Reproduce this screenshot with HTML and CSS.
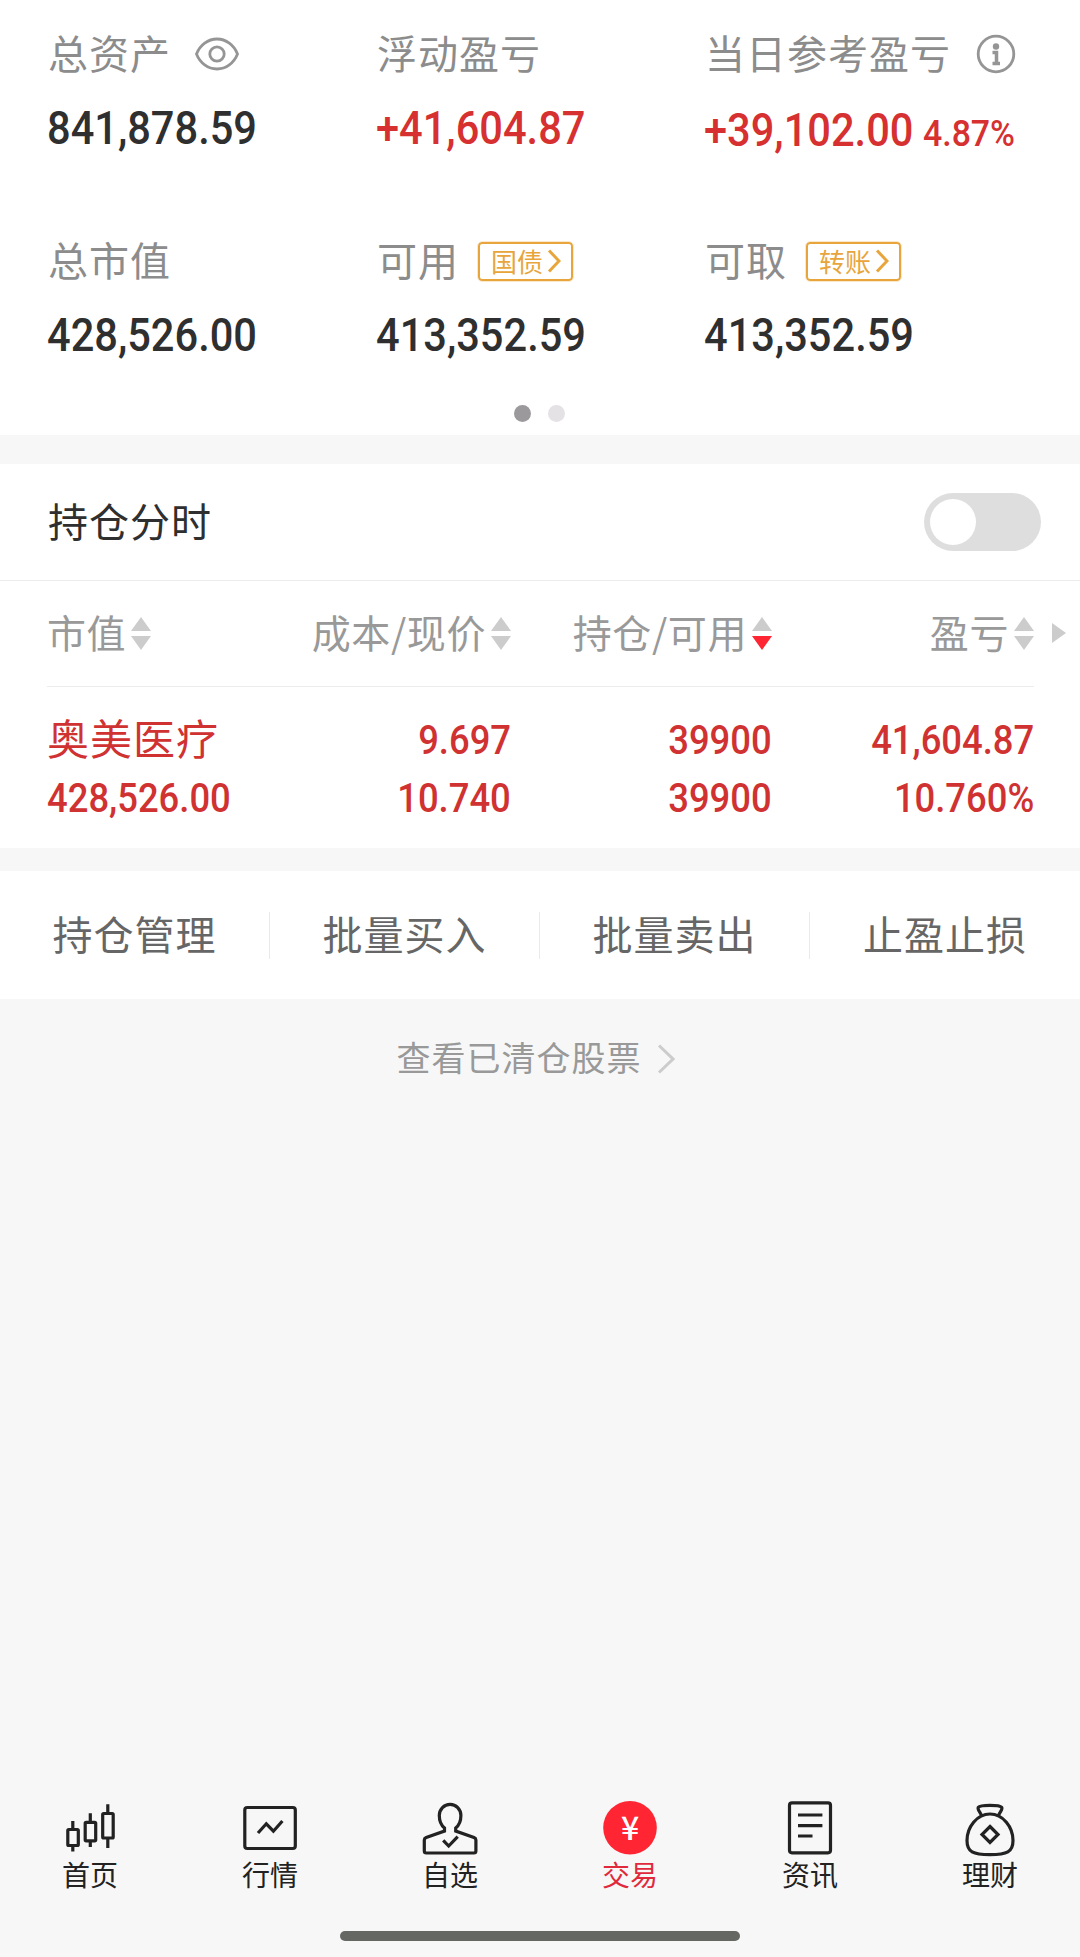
FILE: index.html
```html
<!DOCTYPE html>
<html lang="zh-CN">
<head>
    <meta charset="UTF-8">
    <meta name="viewport" content="width=device-width, initial-scale=1.0">
    <title>持仓</title>
    <link rel="stylesheet" href="styles.css">
</head>
<body>
    <!-- 资产概览 -->
    <section class="assets">
        <div class="asset">
            <div class="label"><span>总资产</span>
                <svg class="eye" width="44" height="34" viewBox="0 0 44 34"><path d="M1.500 17C5 8 13 2 22 2s17 6 20.500 15C39 26 31 32 22 32S5 26 1.500 17Z"/><circle cx="22" cy="17" r="7.200"/></svg>
            </div>
            <div class="value"><span class="num">841,878.59</span></div>
        </div>
        <div class="asset">
            <div class="label"><span>浮动盈亏</span></div>
            <div class="value red"><span class="num">+41,604.87</span></div>
        </div>
        <div class="asset">
            <div class="label"><span>当日参考盈亏</span>
                <svg class="info" width="40" height="40" viewBox="0 0 40 40"><circle cx="20" cy="20" r="17.800"/><circle class="dot" cx="20" cy="12.500" r="3.200"/><path class="stem" d="M16.500 18.500h4V29M16.500 29.500h7.500"/></svg>
            </div>
            <div class="value red daily"><span class="num">+39,102.00</span><span class="num rate">4.87%</span></div>
        </div>
        <div class="asset">
            <div class="label"><span>总市值</span></div>
            <div class="value"><span class="num">428,526.00</span></div>
        </div>
        <div class="asset">
            <div class="label"><span>可用</span>
                <span class="badge"><span>国债</span><svg width="14" height="24" viewBox="0 0 14 24"><path d="M2 1.500 12 12 2 22.500"/></svg></span>
            </div>
            <div class="value"><span class="num">413,352.59</span></div>
        </div>
        <div class="asset">
            <div class="label"><span>可取</span>
                <span class="badge"><span>转账</span><svg width="14" height="24" viewBox="0 0 14 24"><path d="M2 1.500 12 12 2 22.500"/></svg></span>
            </div>
            <div class="value"><span class="num">413,352.59</span></div>
        </div>
    </section>
    <div class="dots"><i class="active"></i><i></i></div>

    <!-- 持仓列表 -->
    <section class="holdings">
        <div class="switch-row">
            <span class="title">持仓分时</span>
            <span class="switch"></span>
        </div>
        <div class="thead">
            <div><span>市值</span><i class="sort"></i></div>
            <div><span>成本/现价</span><i class="sort"></i></div>
            <div><span>持仓/可用</span><i class="sort down"></i></div>
            <div><span>盈亏</span><i class="sort"></i></div>
            <i class="more"></i>
        </div>
        <div class="stock">
            <div><b class="name">奥美医疗</b><span class="num">428,526.00</span></div>
            <div><span class="num">9.697</span><span class="num">10.740</span></div>
            <div><span class="num">39900</span><span class="num">39900</span></div>
            <div><span class="num">41,604.87</span><span class="num">10.760%</span></div>
        </div>
    </section>

    <nav class="actions">
        <a>持仓管理</a>
        <a>批量买入</a>
        <a>批量卖出</a>
        <a>止盈止损</a>
    </nav>

    <a class="cleared"><span>查看已清仓股票</span><svg width="18" height="30" viewBox="0 0 18 30"><path d="M2 1.500 16 15 2 28.500"/></svg></a>

    <!-- 底部导航 -->
    <footer class="tabs">
        <a class="tab">
            <svg viewBox="0 0 60 60"><rect x="7.800" y="29.500" width="10.500" height="16" rx="1"/><path d="M12.800 21v8M12.800 45v6.500"/><rect x="25.200" y="22.300" width="10.500" height="18.500" rx="1"/><path d="M30.300 13.300v9M30.300 41v6"/><rect x="42.700" y="13.500" width="10.500" height="24.500" rx="1"/><path d="M47.800 4.300v9M47.800 38v10"/></svg>
            <span>首页</span>
        </a>
        <a class="tab">
            <svg viewBox="0 0 60 60"><rect x="4.800" y="7.500" width="50.500" height="41" rx="2.500"/><path d="M18 33l8.300-9.200 7.100 7.400 9-10.200"/></svg>
            <span>行情</span>
        </a>
        <a class="tab">
            <svg viewBox="0 0 60 60"><path d="M24.500 31V28C20.800 25 19.300 22 19.300 15.500a10.800 11.200 0 0 1 21.600 0C40.900 22 39.400 25 35.700 28V31L54 37.500q1.900.8 1.900 2.500V51q0 2-2 2H6.300q-2 0-2-2V40q0-1.700 1.900-2.500Z"/><path d="M23.200 40.300l5.500 5.700 9-9.300"/></svg>
            <span>自选</span>
        </a>
        <a class="tab current">
            <svg viewBox="0 0 60 60"><circle cx="30" cy="27.800" r="26.800"/><text x="30" y="40">¥</text></svg>
            <span>交易</span>
        </a>
        <a class="tab">
            <svg viewBox="0 0 60 60"><rect x="9.500" y="2.800" width="41" height="50" rx="2.500"/><path d="M18 15h24.400M18 25.700h24.400M18 36h14.500"/></svg>
            <span>资讯</span>
        </a>
        <a class="tab">
            <svg viewBox="0 0 60 60"><path d="M30 14C17 14 7 27 7 40.500 7 52 13 54.700 30 54.700S53 52 53 40.500C53 27 43 14 30 14Z"/><path d="M21.500 15.500C20 11.500 17 9.500 18.300 7.300 20.500 4.700 39.300 4.700 41.700 7.300 43 9.500 40 11.500 38.500 15.500"/><path d="M30 26.500l8 8-8 8-8-8Z"/></svg>
            <span>理财</span>
        </a>
    </footer>
    <div class="home-bar"></div>
</body>
</html>
```

FILE: styles.css
```css
* {
    box-sizing: border-box;
}

body {
    margin: 0;
    width: 1080px;
    height: 1957px;
    display: flex;
    flex-direction: column;
    background: #f7f7f7;
    color: #2f2f2f;
    font-family: "Noto Sans CJK SC", sans-serif;
    font-size: 40px;
    letter-spacing: 1px;
    overflow: hidden;
}

svg {
    fill: none;
    stroke: currentColor;
    stroke-width: 3;
    flex: none;
}

/* 数字字体压窄 */
.num {
    display: inline-block;
    font-family: Roboto, sans-serif;
    font-weight: 500;
    letter-spacing: 0;
    transform: scaleX(0.885);
    transform-origin: left center;
}

.red {
    color: #d63030;
}

/* 资产概览 */
.assets {
    height: 392px;
    padding: 24px 0 0 48px;
    background: #fff;
    display: grid;
    grid-template-columns: 329px 328px 1fr;
    grid-template-rows: 207px 1fr;
}

.label {
    height: 60px;
    display: flex;
    align-items: center;
    color: #8c8c8c;
    line-height: 60px;
    white-space: nowrap;
}

.label > span:first-child {
    padding-bottom: 4px;
}

.eye,
.info {
    margin-left: 24px;
    color: #959595;
    stroke-width: 2.8;
}

.info {
    margin-left: 25px;
}

.info .dot {
    fill: currentColor;
    stroke: none;
}

.info .stem {
    stroke-width: 3.5;
}

.badge {
    width: 95px;
    height: 39px;
    margin-left: 19px;
    padding-left: 11px;
    display: flex;
    align-items: center;
    border: 2px solid #e8a53c;
    border-radius: 4px;
    outline: 1px solid #fbe9cd;
    color: #e8a53c;
    font-size: 26px;
    line-height: 32px;
    letter-spacing: 0;
}

.badge span {
    padding-bottom: 1px;
}

.badge svg {
    margin-left: 4px;
}

.value {
    height: 60px;
    margin-top: 10px;
    font-size: 47px;
    line-height: 60px;
    white-space: nowrap;
}

.value .num {
    margin-left: -1px;
}

.daily {
    padding-top: 2px;
}

.value .rate {
    margin-left: -18px;
    font-size: 36px;
    transform: scaleX(0.94);
}

.dots {
    height: 43px;
    padding: 13px 2px 0 0;
    background: #fff;
    display: flex;
    justify-content: center;
    gap: 17px;
}

.dots i {
    width: 17px;
    height: 17px;
    border-radius: 50%;
    background: #e5e2e6;
}

.dots .active {
    background: #9b999c;
}

/* 持仓 */
.holdings {
    height: 384px;
    margin-top: 29px;
    background: #fff;
}

.switch-row {
    height: 117px;
    padding: 0 39px 0 48px;
    display: flex;
    align-items: center;
    justify-content: space-between;
    border-bottom: 1px solid #ececec;
}

.title {
    padding-bottom: 4px;
}

.switch {
    width: 117px;
    height: 58px;
    padding: 6px;
    border-radius: 29px;
    background: #dedede;
}

.switch::before {
    content: "";
    display: block;
    width: 46px;
    height: 46px;
    border-radius: 50%;
    background: #fff;
}

.thead,
.stock {
    margin: 0 46px 0 47px;
    display: grid;
    grid-template-columns: 203px 261px 261px 262px;
}

.thead {
    position: relative;
    height: 106px;
    align-items: center;
    border-bottom: 1px solid #ececec;
    color: #999;
    font-size: 39px;
    letter-spacing: 0.6px;
}

.thead div {
    display: flex;
    align-items: center;
    justify-content: flex-end;
    white-space: nowrap;
}

.thead div:first-child {
    justify-content: flex-start;
}

.thead span {
    padding-bottom: 5px;
}

.sort {
    margin-left: 5px;
    display: flex;
    flex-direction: column;
    gap: 5px;
}

.sort::before,
.sort::after {
    content: "";
    border: 10px solid transparent;
}

.sort::before {
    border-top: 0;
    border-bottom: 14px solid #ccc;
}

.sort::after {
    border-bottom: 0;
    border-top: 14px solid #ccc;
}

.sort.down::after {
    border-top-color: #ff2533;
}

.more {
    position: absolute;
    right: -32px;
    top: 42px;
    border: 10px solid transparent;
    border-left: 14px solid #ccc;
    border-right: 0;
}

.stock {
    padding-top: 25px;
    color: #d03232;
    text-align: right;
}

.stock div {
    display: flex;
    flex-direction: column;
    align-items: flex-end;
}

.stock .num {
    height: 58px;
    line-height: 58px;
    transform: scaleX(0.91);
    transform-origin: right center;
}

.stock div:first-child {
    align-items: flex-start;
}

.stock div:first-child .num {
    transform-origin: left center;
}

.name {
    height: 58px;
    line-height: 49px;
    font-size: 42px;
    font-weight: 400;
}

/* 操作按钮 */
.actions {
    height: 128px;
    margin-top: 23px;
    background: #fff;
    display: flex;
    align-items: center;
    color: #666;
}

.actions a {
    width: 270px;
    height: 47px;
    line-height: 42px;
    text-align: center;
    border-right: 1px solid #eaeaea;
}

.actions a:last-child {
    border: 0;
}

.cleared {
    height: 120px;
    padding-right: 9px;
    display: flex;
    align-items: center;
    justify-content: center;
    color: #999;
    font-size: 34px;
}

.cleared span {
    padding-bottom: 5px;
}

.cleared svg {
    margin-left: 15px;
    color: #ccc;
}

/* 底部导航 */
.tabs {
    margin-top: auto;
    height: 131px;
    display: flex;
    color: #222;
    font-size: 28px;
    letter-spacing: 0;
}

.tab {
    width: 180px;
    display: flex;
    flex-direction: column;
    align-items: center;
}

.tab svg {
    width: 60px;
    height: 60px;
    stroke-width: 3.2;
}

.tab span {
    line-height: 29px;
}

.tab.current {
    color: #e02a3c;
}

.tab circle {
    fill: #ff2533;
    stroke: none;
}

.tab text {
    fill: #fff;
    stroke: none;
    font-size: 32px;
    font-weight: 500;
    text-anchor: middle;
}

.home-bar {
    width: 400px;
    height: 10px;
    margin: 0 auto 16px;
    border-radius: 5px;
    background: #656763;
}
```
